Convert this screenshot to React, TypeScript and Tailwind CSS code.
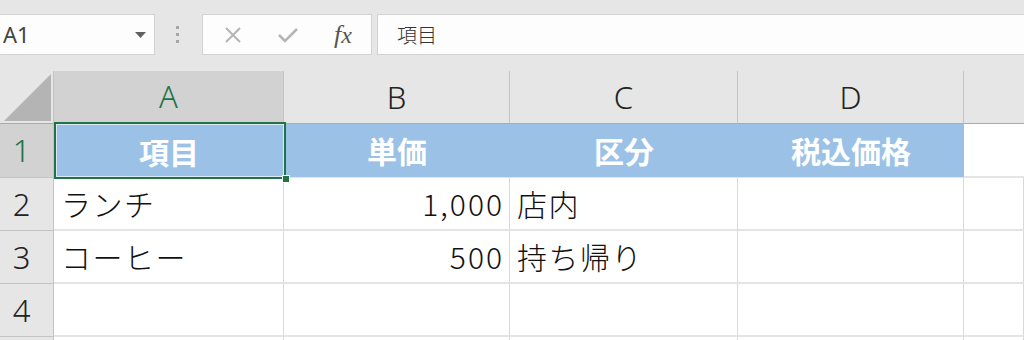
import React from "react";

const CJK = "font-['Noto_Sans_CJK_JP',sans-serif]";
const UI = "font-['Noto_Sans','Open_Sans',sans-serif]";

function ColHeader({ label, selected }: { label: string; selected?: boolean }) {
  return (
    <div
      className={`flex items-center justify-center border-r border-b border-r-[#c4c4c4] border-b-[#ababab] text-[31px] font-light ${UI} ${
        selected ? "bg-[#d2d2d2] text-[#217346] border-b-2 border-b-[#217346]" : "bg-[#e6e6e6] text-[#222]"
      }`}
    >
      {label}
    </div>
  );
}

function RowHeader({ label, selected }: { label?: string; selected?: boolean }) {
  return (
    <div
      className={`flex items-center justify-center pr-[10px] border-r border-b border-[#c4c4c4] text-[31px] font-light ${UI} ${
        selected ? "bg-[#d2d2d2] text-[#217346]" : "bg-[#e6e6e6] text-[#222]"
      }`}
    >
      {label}
    </div>
  );
}

function Cell({
  children,
  align = "left",
}: {
  children?: React.ReactNode;
  align?: "left" | "right";
}) {
  return (
    <div
      className={`flex items-center bg-white border-r border-r-[#d9d9d9] border-b-2 border-b-[#e4e4e4] text-[30px] font-light text-[#111] ${CJK} ${
        align === "right" ? "justify-end pr-[5px] tracking-[2px]" : "justify-start pl-[7px] tracking-[1.5px]"
      }`}
    >
      {children}
    </div>
  );
}

function HeadCell({ children }: { children: React.ReactNode }) {
  return (
    <div
      className={`flex items-center justify-center bg-[#9bc2e6] border-b border-b-[#e4e4e4] text-[30px] font-bold text-white ${CJK}`}
    >
      {children}
    </div>
  );
}

export default function App() {
  return (
    <div className="w-[1024px] h-[340px] overflow-hidden bg-[#e6e6e6]">
      {/* Formula bar */}
      <div className="h-[71px] flex items-start pt-[14px]">
        <div className="w-[155px] h-[41px] bg-[#fdfdfd] border border-l-0 border-[#d2d2d2] flex items-center justify-between pl-[3px] pr-[8px]">
          <span className={`text-[22px] text-[#444] ${UI}`}>A1</span>
          <svg width="11" height="6" viewBox="0 0 11 6">
            <polygon points="0,0 11,0 5.5,6" fill="#606060" />
          </svg>
        </div>
        <div className="w-[47px] h-[41px] flex flex-col items-center justify-center gap-[4px] pr-[2px]">
          <span className="w-[3px] h-[3px] bg-[#a6a6a6]" />
          <span className="w-[3px] h-[3px] bg-[#a6a6a6]" />
          <span className="w-[3px] h-[3px] bg-[#a6a6a6]" />
        </div>
        <div className="w-[170px] h-[41px] bg-[#fdfdfd] border border-[#d2d2d2] flex items-center">
          <div className="w-[58px] flex justify-center pl-[2px]">
            <svg width="18" height="18" viewBox="0 0 18 18">
              <path d="M2 2 L16 16 M16 2 L2 16" stroke="#b5b5b5" strokeWidth="2" fill="none" />
            </svg>
          </div>
          <div className="w-[54px] flex justify-center">
            <svg width="22" height="18" viewBox="0 0 22 18">
              <path d="M2 9 L8 15 L20 3" stroke="#b5b5b5" strokeWidth="2.6" fill="none" />
            </svg>
          </div>
          <div className="w-[56px] flex justify-center">
            <span className="font-['Liberation_Serif',serif] italic text-[26px] text-[#555] leading-none">
              f<span className="text-[24px]">x</span>
            </span>
          </div>
        </div>
        <div className="ml-[5px] flex-1 h-[41px] bg-[#fdfdfd] border border-r-0 border-[#d2d2d2] flex items-center pl-[19px]">
          <span className={`text-[20px] font-light text-[#333] ${CJK}`}>項目</span>
        </div>
      </div>

      {/* Sheet grid */}
      <div className="grid grid-cols-[54px_230px_226px_228px_226px_1fr] grid-rows-[53px_54px_53px_53px_53px_53px]">
        {/* corner */}
        <div className="bg-[#e6e6e6] border-r border-b border-r-[#c4c4c4] border-b-[#ababab] flex items-end justify-end pr-[1px] pb-[2px]">
          <svg width="48" height="47" viewBox="0 0 48 47">
            <polygon points="47,0 47,47 0,47" fill="#b4b4b4" />
          </svg>
        </div>
        <ColHeader label="A" selected />
        <ColHeader label="B" />
        <ColHeader label="C" />
        <ColHeader label="D" />
        <div className="bg-[#e6e6e6] border-b border-b-[#ababab]" />

        {/* row 1 */}
        <RowHeader label="1" selected />
        <div className="relative">
          <div className={`h-full flex items-center justify-center bg-[#9bc2e6] text-[30px] font-bold text-white ${CJK}`}>
            項目
          </div>
          <div className="absolute left-0 top-[-2px] right-[-2px] bottom-[-1px] border-2 border-[#217346] z-10">
            <div className="w-full h-full border border-[#dbe8f5]" />
            <div className="absolute right-[-6px] bottom-[-6px] w-[8px] h-[8px] bg-[#217346] border border-white" />
          </div>
        </div>
        <HeadCell>単価</HeadCell>
        <HeadCell>区分</HeadCell>
        <HeadCell>税込価格</HeadCell>
        <div className="bg-white border-b-2 border-b-[#e4e4e4]" />

        {/* row 2 */}
        <RowHeader label="2" />
        <Cell>ランチ</Cell>
        <Cell align="right">1,000</Cell>
        <Cell>店内</Cell>
        <Cell />
        <Cell />

        {/* row 3 */}
        <RowHeader label="3" />
        <Cell>コーヒー</Cell>
        <Cell align="right">500</Cell>
        <Cell>持ち帰り</Cell>
        <Cell />
        <Cell />

        {/* row 4 */}
        <RowHeader label="4" />
        <Cell />
        <Cell />
        <Cell />
        <Cell />
        <Cell />

        {/* row 5 (only its top edge is visible) */}
        <RowHeader />
        <Cell />
        <Cell />
        <Cell />
        <Cell />
        <Cell />
      </div>
    </div>
  );
}
